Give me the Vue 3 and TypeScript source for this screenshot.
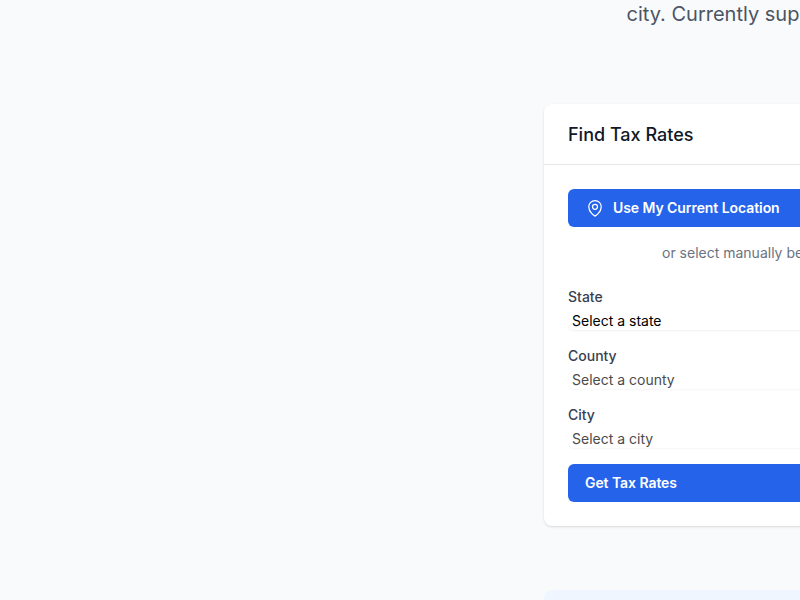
<script setup lang="ts">
interface Field {
  id: string
  label: string
  placeholder: string
  disabled: boolean
}

const fields: Field[] = [
  { id: 'state', label: 'State', placeholder: 'Select a state', disabled: false },
  { id: 'county', label: 'County', placeholder: 'Select a county', disabled: true },
  { id: 'city', label: 'City', placeholder: 'Select a city', disabled: true },
]
</script>

<template>
  <main class="page">
    <p class="intro">city. Currently sup</p>
    <section class="card">
      <header class="card-header">
        <h2>Find Tax Rates</h2>
      </header>
      <div class="card-body">
        <button class="button" type="button">
          <svg class="pin" viewBox="0 0 24 24" aria-hidden="true">
            <path d="M15 10.5a3 3 0 1 1-6 0 3 3 0 0 1 6 0Z" />
            <path d="M19.5 10.5c0 7.142-7.5 11.25-7.5 11.25S4.5 17.642 4.5 10.5a7.5 7.5 0 1 1 15 0Z" />
          </svg>
          Use My Current Location
        </button>
        <p class="hint">or select manually be</p>
        <div v-for="field in fields" :key="field.id" class="field">
          <label :for="field.id">{{ field.label }}</label>
          <select :id="field.id" :disabled="field.disabled">
            <option>{{ field.placeholder }}</option>
          </select>
        </div>
        <button class="button" type="button">Get Tax Rates</button>
      </div>
    </section>
    <aside class="notice"></aside>
  </main>
</template>

<style>
body {
  background: #f9fafc;
}
</style>

<style scoped>
.page {
  box-sizing: border-box;
  width: 800px;
  height: 600px;
  overflow: hidden;
  background: #f9fafc;
  font-family: Inter, sans-serif;
  padding-left: 544px;
}
.intro {
  margin: 0 0 0 82.5px;
  height: 104px;
  font-size: 20px;
  line-height: 28px;
  color: #4b5563;
  white-space: nowrap;
}
.card {
  width: 448px;
  height: 422px;
  background: #fff;
  border-radius: 8px;
  box-shadow: 0 1px 3px rgba(0, 0, 0, 0.1), 0 1px 2px -1px rgba(0, 0, 0, 0.1);
}
.card-header {
  padding: 17px 24px 15px;
  border-bottom: 1px solid #e5e7eb;
}
h2 {
  margin: 0;
  font-size: 18px;
  line-height: 28px;
  font-weight: 500;
  color: #111827;
}
.card-body {
  padding: 24px;
}
.button {
  display: flex;
  align-items: center;
  box-sizing: border-box;
  width: 100%;
  height: 38px;
  padding: 0 17px;
  border: 0;
  border-radius: 6px;
  background: #2563eb;
  color: #fff;
  font: 600 14px/20px Inter, sans-serif;
  letter-spacing: -0.07px;
}
.pin {
  width: 20px;
  height: 20px;
  margin-right: 8px;
  fill: none;
  stroke: currentColor;
  stroke-width: 1.5;
  stroke-linecap: round;
  stroke-linejoin: round;
}
.hint {
  margin: 16px 0 24px;
  padding-left: 94px;
  white-space: nowrap;
  font-size: 14px;
  line-height: 20px;
  color: #6b7280;
}
.field {
  margin-bottom: 16px;
}
label {
  display: block;
  margin-bottom: 4px;
  font-size: 14px;
  line-height: 20px;
  font-weight: 500;
  color: #374151;
}
select {
  display: block;
  box-sizing: border-box;
  width: 100%;
  height: 19px;
  padding: 0;
  border: 0;
  border-radius: 6px;
  background: #fff;
  color: #000;
  font: 400 14px/20px Inter, sans-serif;
  box-shadow: 0 1px 2px rgba(0, 0, 0, 0.06);
}
select:disabled {
  color: #4b4b4b;
  opacity: 1;
  box-shadow: 0 1px 2px rgba(0, 0, 0, 0.04);
}
.notice {
  width: 448px;
  height: 80px;
  margin-top: 64px;
  border-radius: 8px;
  background: #eff6ff;
}
</style>
